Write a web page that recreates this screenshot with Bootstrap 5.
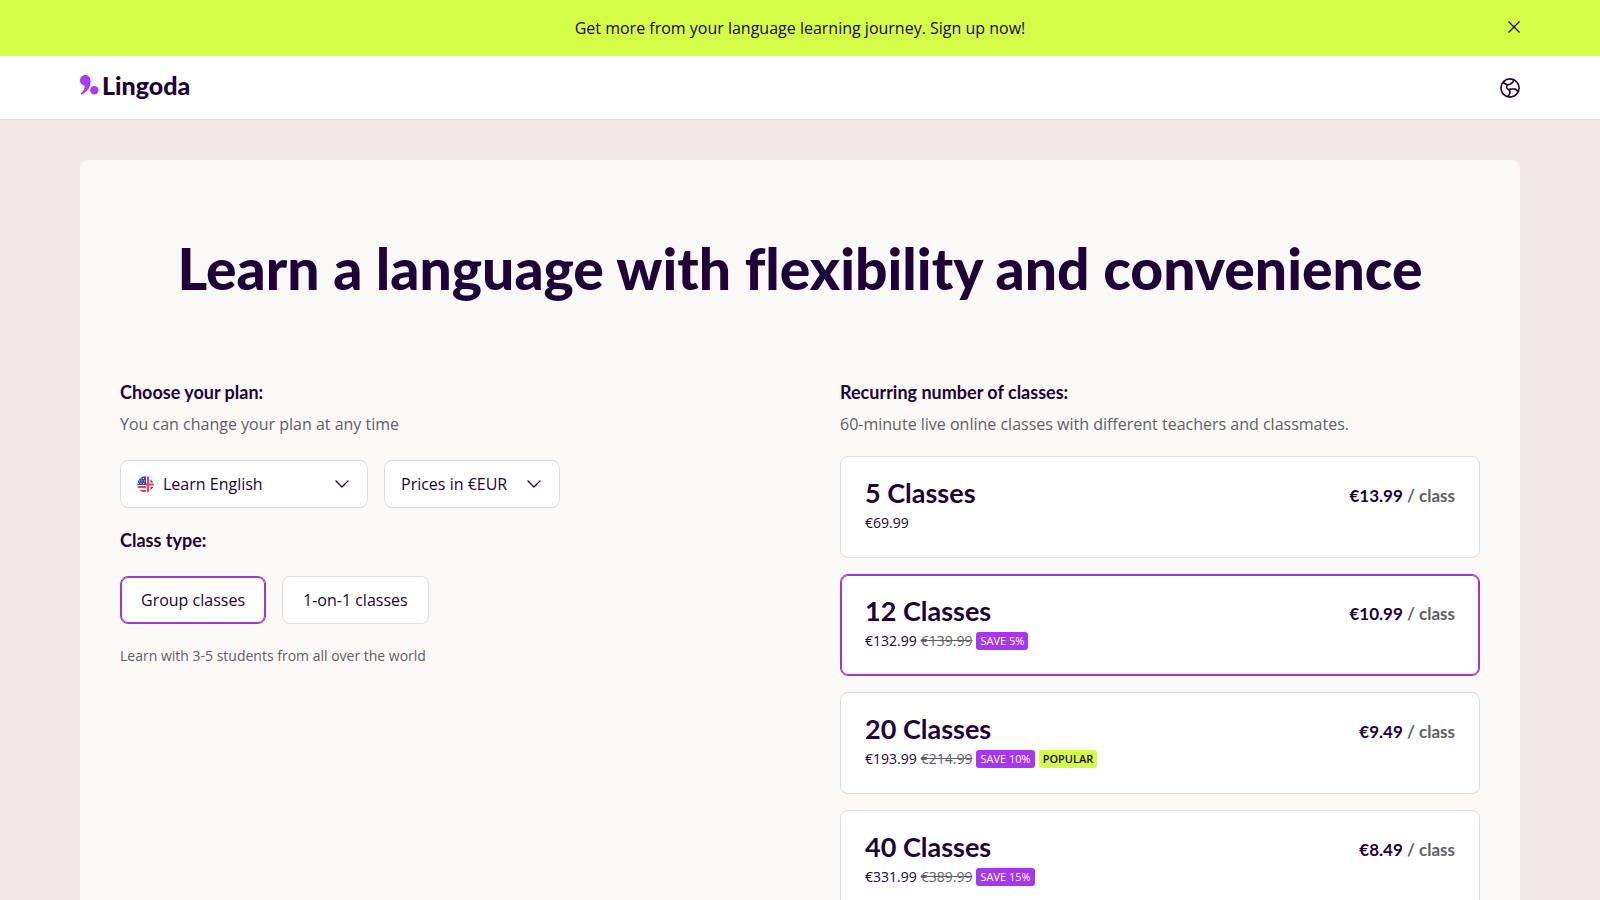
<!DOCTYPE html>
<html lang="en">
<head>
<meta charset="utf-8">
<meta name="viewport" content="width=device-width, initial-scale=1">
<title>Lingoda – Plans</title>
<link href="https://cdn.jsdelivr.net/npm/bootstrap@5.3.0/dist/css/bootstrap.min.css" rel="stylesheet">
<style>
  :root { --ink: #1d0338; --grey: #626064; --line: #dddcde; --violet: #9a38d0; --lime: #d4fd48; }
  body { font-family: "Open Sans", sans-serif; font-size: 16px; line-height: 24px; color: var(--ink); background: #f4e8ea; }
  h1, h2, .brand, .plan-name, .plan-rate { font-family: Lato, sans-serif; font-weight: 700; margin: 0; }
  .promo { background: var(--lime); min-height: 56px; }
  .page-x { padding-left: 80px; padding-right: 80px; }
  .icon-btn { line-height: 0; color: var(--ink); }
  .promo .icon-btn { right: 80px; }
  .site-head { min-height: 64px; border-bottom: 1px solid var(--line); }
  .brand { font-size: 25px; line-height: 26px; color: var(--ink); font-weight: 900; gap: 3px; padding-bottom: 5px; }
  .sheet { background: #faf9f7; border-radius: 8px; padding: 76px 40px 40px; }
  .sheet .row { --bs-gutter-x: 80px; }
  h1 { font-size: 57px; line-height: 64px; margin-bottom: 76px; font-weight: 900; font-variant-ligatures: none; }
  h2 { font-size: 18px; line-height: 32px; }
  .muted { color: var(--grey); }
  .box { background-color: #fff; border: 1px solid var(--line); border-radius: 8px; color: var(--ink); }
  .form-select.box { height: 48px; padding: 0 48px 0 16px; background-position: right 17px center; background-size: 16px 16px;
    background-image: url("data:image/svg+xml,%3csvg xmlns='http://www.w3.org/2000/svg' viewBox='0 0 16 16'%3e%3cpath fill='none' stroke='%231d0338' stroke-width='1.3' stroke-linecap='round' stroke-linejoin='round' d='m2 5 6 6 6-6'/%3e%3c/svg%3e"); }
  .lang, .lang .form-select { width: 248px; }
  .lang .form-select { padding-left: 42px; }
  .flag { position: absolute; left: 17px; top: 16px; pointer-events: none; }
  .money { width: 176px; }
  .pick { display: block; cursor: pointer; }
  .type-pick { padding: 11px 20px; }
  .btn-check:checked + .pick { border-color: var(--violet); box-shadow: inset 0 0 0 1px var(--violet); }
  .plan-pick { padding: 18px 24px 22px; }
  .plan-name { font-size: 27px; line-height: 36px; }
  .plan-rate { font-size: 17px; line-height: 24px; padding-top: 9px; }
  .fine { font-size: 14px; line-height: 24px; }
  .tag { font-size: 11px; line-height: 16px; padding: 1px 4px; border-radius: 3px; background: #a835f2; color: #fff; }
  .tag-lime { background: var(--lime); color: var(--ink); font-weight: 600; }
</style>
</head>
<body>
<div class="promo page-x d-flex align-items-center justify-content-center position-relative">
  <span>Get more from your language learning journey. Sign up now!</span>
  <button type="button" class="btn icon-btn border-0 p-0 position-absolute" aria-label="Close">
    <svg width="12" height="14" viewBox="0 0 12 14" fill="none" stroke="currentColor" stroke-width="1.200"><path d="m.5 .5 11 11M11.500 .5l-11 11"/></svg>
  </button>
</div>
<header class="site-head page-x bg-white d-flex align-items-center justify-content-between">
  <a href="#" class="brand d-flex align-items-center text-decoration-none">
    <svg width="19" height="20" viewBox="0 0 19 20" fill="#a93bf5" aria-hidden="true"><path d="M5.300 0C8.600 0 10.600 2.400 10.600 6.200 10.600 12.500 7 17.600 1.200 19.600L.7 18.500C3.600 16.500 4.700 13.500 4.800 10.600 2 10.500 0 8.200 0 5.300 0 2.300 2.300 0 5.300 0Z"/><circle cx="14.300" cy="15.200" r="4.200"/></svg>
    <span>Lingoda</span>
  </a>
  <button type="button" class="btn icon-btn border-0 p-0" aria-label="Change language">
    <svg width="20" height="20" viewBox="0 0 20 20" fill="none" stroke="currentColor" stroke-width="1.600" stroke-linejoin="round"><circle cx="10" cy="10" r="9.100"/><path d="M13.500 1.800 13 4.200 10.500 6 7.500 7 6.300 9.500M3 4.500 7.500 7M18.500 13.500 15.200 11 10.500 11 8.300 12.500M6.300 9.500 10 13 9.800 15.600 7.800 18.600"/></svg>
  </button>
</header>
<main class="page-x py-4">
  <div class="sheet mt-3">
    <h1 class="text-center">Learn a language with flexibility and convenience</h1>
    <div class="row">
      <section class="col-6">
        <h2 class="mb-1">Choose your plan:</h2>
        <p class="muted mb-4">You can change your plan at any time</p>
        <div class="d-flex gap-3 mb-3">
          <div class="lang position-relative">
            <select class="form-select box" aria-label="Language"><option>Learn English</option></select>
            <svg class="flag" width="17" height="17" viewBox="0 0 17 17" aria-hidden="true">
              <clipPath id="disc"><circle cx="8.500" cy="8.500" r="8.200"/></clipPath>
              <g clip-path="url(#disc)"><path fill="#f6e4ea" d="M0 0h17v17H0z"/><path fill="#e8475c" d="M0 10h9v2H0zM0 14h9v2H0z"/><path fill="#3c4bb0" d="M0 0h9v9H0z"/><path stroke="#fff" stroke-width=".8" stroke-dasharray="1 1.500" d="M1 2.500h7M2 5h6M1 7.500h7"/><path fill="#f04359" d="M10 0h2v17h-2zM9 7.500h8v2H9z"/><path fill="#3c4bb0" d="m13.500 3.500 3 3h-3zM13.500 11h3l-3 3z"/></g>
            </svg>
          </div>
          <select class="form-select box money" aria-label="Currency"><option>Prices in €EUR</option></select>
        </div>
        <h2 class="mb-3 pb-1">Class type:</h2>
        <div class="d-flex gap-3 mb-3 pb-1">
          <div><input type="radio" class="btn-check" name="type" id="group" checked><label class="pick box type-pick" for="group">Group classes</label></div>
          <div><input type="radio" class="btn-check" name="type" id="solo"><label class="pick box type-pick" for="solo">1-on-1 classes</label></div>
        </div>
        <p class="fine muted mb-0">Learn with 3-5 students from all over the world</p>
      </section>
      <section class="col-6">
        <h2 class="mb-1">Recurring number of classes:</h2>
        <p class="muted mb-3 pb-1">60-minute live online classes with different teachers and classmates.</p>
        <div class="d-flex flex-column gap-3">
          <div><input type="radio" class="btn-check" name="plan" id="p5"><label class="pick box plan-pick" for="p5">
            <span class="d-flex justify-content-between"><span class="plan-name">5 Classes</span><span class="plan-rate">€13.99 <span class="muted">/ class</span></span></span>
            <span class="fine d-flex align-items-center gap-1"><span>€69.99</span></span></label></div>
          <div><input type="radio" class="btn-check" name="plan" id="p12" checked><label class="pick box plan-pick" for="p12">
            <span class="d-flex justify-content-between"><span class="plan-name">12 Classes</span><span class="plan-rate">€10.99 <span class="muted">/ class</span></span></span>
            <span class="fine d-flex align-items-center gap-1"><span>€132.99</span><s class="muted">€139.99</s><span class="tag">SAVE 5%</span></span></label></div>
          <div><input type="radio" class="btn-check" name="plan" id="p20"><label class="pick box plan-pick" for="p20">
            <span class="d-flex justify-content-between"><span class="plan-name">20 Classes</span><span class="plan-rate">€9.49 <span class="muted">/ class</span></span></span>
            <span class="fine d-flex align-items-center gap-1"><span>€193.99</span><s class="muted">€214.99</s><span class="tag">SAVE 10%</span><span class="tag tag-lime">POPULAR</span></span></label></div>
          <div><input type="radio" class="btn-check" name="plan" id="p40"><label class="pick box plan-pick" for="p40">
            <span class="d-flex justify-content-between"><span class="plan-name">40 Classes</span><span class="plan-rate">€8.49 <span class="muted">/ class</span></span></span>
            <span class="fine d-flex align-items-center gap-1"><span>€331.99</span><s class="muted">€389.99</s><span class="tag">SAVE 15%</span></span></label></div>
        </div>
      </section>
    </div>
  </div>
</main>
<script src="https://cdn.jsdelivr.net/npm/bootstrap@5.3.0/dist/js/bootstrap.bundle.min.js"></script>
</body>
</html>
